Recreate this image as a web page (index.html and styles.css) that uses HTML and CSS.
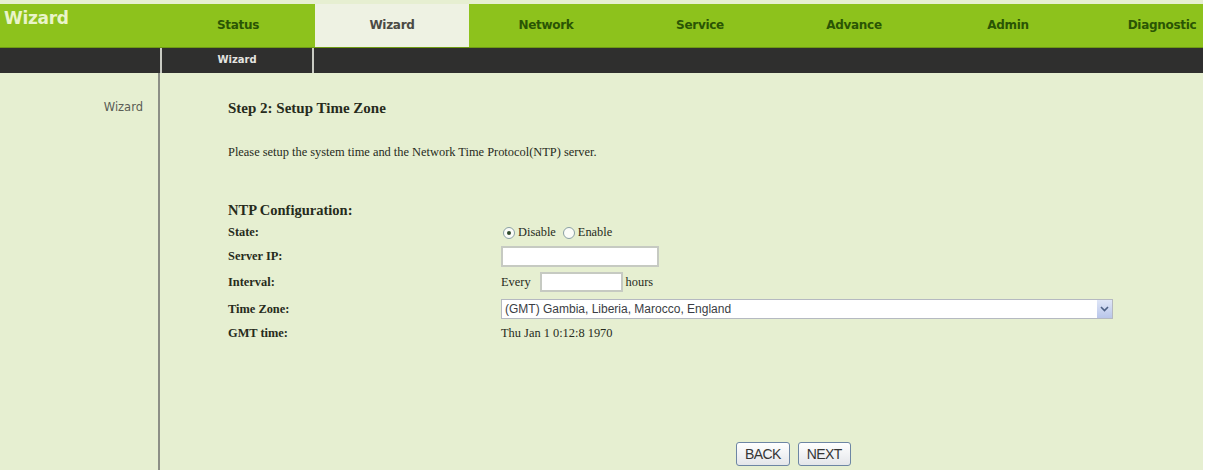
FILE: index.html
```html
<!DOCTYPE html>
<html lang="en">
<head>
    <meta charset="UTF-8">
    <meta name="viewport" content="width=device-width, initial-scale=1.0">
    <title>Wizard</title>
    <link rel="stylesheet" href="styles.css">
</head>
<body>
    <div class="page">
        <!-- Top menu -->
        <div class="topbar">
            <div class="logo">Wizard</div>
            <div class="menu-item">Status</div>
            <div class="menu-item active">Wizard</div>
            <div class="menu-item">Network</div>
            <div class="menu-item">Service</div>
            <div class="menu-item">Advance</div>
            <div class="menu-item">Admin</div>
            <div class="menu-item">Diagnostic</div>
        </div>

        <!-- Sub menu -->
        <div class="subbar">
            <div class="sub-blank"></div>
            <div class="sub-item">Wizard</div>
        </div>

        <div class="main">
            <div class="sidebar">
                <div class="side-link">Wizard</div>
            </div>

            <div class="content">
                <h3 class="step-title">Step 2: Setup Time Zone</h3>
                <p class="step-desc">Please setup the system time and the Network Time Protocol(NTP) server.</p>

                <h4 class="section-title">NTP Configuration:</h4>
                <form class="ntp-form" onsubmit="return false;">
                    <div class="row row-state">
                        <div class="label">State:</div>
                        <div class="value">
                            <label class="radio"><input type="radio" name="ntpState" value="0" checked> Disable</label>
                            <label class="radio"><input type="radio" name="ntpState" value="1"> Enable</label>
                        </div>
                    </div>
                    <div class="row row-server">
                        <div class="label">Server IP:</div>
                        <div class="value">
                            <input type="text" class="text-input server-ip">
                        </div>
                    </div>
                    <div class="row row-interval">
                        <div class="label">Interval:</div>
                        <div class="value">
                            Every<input type="text" class="text-input interval">hours
                        </div>
                    </div>
                    <div class="row row-zone">
                        <div class="label">Time Zone:</div>
                        <div class="value">
                            <div class="select-wrap">
                                <select class="zone-select">
                                    <option>(GMT) Gambia, Liberia, Marocco, England</option>
                                </select>
                                <span class="select-arrow">
                                    <svg width="9" height="6" viewBox="0 0 9 6"><path d="M1 1 L4.5 4.5 L8 1" fill="none" stroke="#4d6185" stroke-width="1.6"/></svg>
                                </span>
                            </div>
                        </div>
                    </div>
                    <div class="row row-gmt">
                        <div class="label">GMT time:</div>
                        <div class="value">Thu Jan 1 0:12:8 1970</div>
                    </div>

                    <div class="actions">
                        <button type="button" class="btn">BACK</button>
                        <button type="button" class="btn">NEXT</button>
                    </div>
                </form>
            </div>
        </div>
    </div>
</body>
</html>
```

FILE: styles.css
```css
body {
    margin: 0;
    padding: 0;
    background-color: #fff;
    font-family: "Liberation Serif", "Times New Roman", serif;
    overflow: hidden;
}

.page {
    width: 1203px;
    height: 470px;
    padding-top: 4px;
    box-sizing: border-box;
    overflow: hidden;
    background-color: #e6efd1;
}

/* green menu bar */
.topbar {
    display: flex;
    height: 43px;
    background-color: #8dc21c;
    border-bottom: 1px solid #6f9a14;
    font-family: "DejaVu Sans", Verdana, sans-serif;
    font-weight: bold;
}

.logo {
    flex: 0 0 161px;
    padding-left: 4px;
    box-sizing: border-box;
    line-height: 28px;
    font-size: 17px;
    color: #e9f4c9;
    letter-spacing: -0.3px;
}

.menu-item {
    flex: 0 0 154px;
    text-align: center;
    line-height: 43px;
    font-size: 12px;
    color: #2a5504;
    letter-spacing: -0.3px;
}

.menu-item.active {
    background-color: #eef2e3;
    color: #4a4a44;
}

/* dark sub menu */
.subbar {
    display: flex;
    height: 25px;
    background-color: #2f2f2e;
    font-family: "DejaVu Sans", Verdana, sans-serif;
}

.sub-blank {
    flex: 0 0 160px;
    border-right: 2px solid #c9cbc3;
}

.sub-item {
    flex: 0 0 150px;
    border-right: 2px solid #c9cbc3;
    text-align: center;
    line-height: 23px;
    font-size: 10px;
    font-weight: bold;
    color: #e4e4e0;
}

.main {
    display: flex;
    height: 397px;
}

.sidebar {
    flex: 0 0 160px;
    border-right: 2px solid #8c8f86;
    padding-top: 27px;
    text-align: right;
    box-sizing: border-box;
}

.side-link {
    padding-right: 15px;
    font-family: "DejaVu Sans", Tahoma, sans-serif;
    font-size: 11.5px;
    color: #5a5d55;
}

.content {
    flex: 1;
    padding: 26px 0 0 68px;
    color: #262b1c;
}

.step-title {
    margin: 0;
    font-size: 15px;
    line-height: 18px;
}

.step-desc {
    margin: 26px 0 0;
    font-size: 12.4px;
    line-height: 18px;
}

.section-title {
    margin: 40px 0 0;
    font-size: 14.5px;
    line-height: 18px;
}

.ntp-form {
    margin-top: 2px;
    font-size: 12.4px;
}

.row {
    display: grid;
    grid-template-columns: 273px 1fr;
    align-items: center;
}

.row-state { height: 23px; }
.row-server { height: 24px; }
.row-interval { height: 28px; }
.row-zone { height: 26px; }
.row-gmt { height: 22px; }

.label {
    font-weight: bold;
}

.value {
    display: flex;
    align-items: center;
}

.radio {
    display: flex;
    align-items: center;
    margin-right: 5px;
}

.radio input {
    appearance: none;
    width: 12px;
    height: 12px;
    margin: 0 3px 0 2px;
    border: 1px solid #8aa0a4;
    border-radius: 50%;
    background-color: #fbfcf8;
    box-sizing: border-box;
    display: grid;
    place-items: center;
}

.radio input:checked::after {
    content: "";
    width: 4px;
    height: 4px;
    border-radius: 50%;
    background-color: #2f4a2c;
}

.text-input {
    height: 21px;
    border: 2px solid #c6cac2;
    background-color: #fff;
    box-sizing: border-box;
    padding: 0 3px;
    font-size: 12px;
}

.server-ip {
    width: 158px;
}

.interval {
    width: 83px;
    height: 20px;
    margin: 0 3px 0 9px;
}

.select-wrap {
    position: relative;
    width: 612px;
}

.zone-select {
    appearance: none;
    width: 100%;
    height: 20px;
    padding: 0 3px;
    border: 1px solid #b5b9c1;
    background-color: #fff;
    font-family: "Liberation Sans", Arial, sans-serif;
    font-size: 12px;
    color: #3a3d44;
}

/* arrow button sitting over the right end of the select */
.select-arrow {
    position: absolute;
    top: 1px;
    right: 1px;
    width: 15px;
    height: 18px;
    display: flex;
    align-items: center;
    justify-content: center;
    background: linear-gradient(#dfe6f7, #b9c6ea);
    pointer-events: none;
}

.actions {
    display: flex;
    gap: 8px;
    margin-top: 98px;
    padding-left: 508px;
}

.btn {
    height: 24px;
    padding: 0 8px;
    border: 1px solid #6d86a4;
    border-radius: 3px;
    background: linear-gradient(#ffffff, #e4e6ea);
    font-family: "Liberation Sans", Arial, sans-serif;
    font-size: 14px;
    color: #353535;
    letter-spacing: -0.6px;
}
```
